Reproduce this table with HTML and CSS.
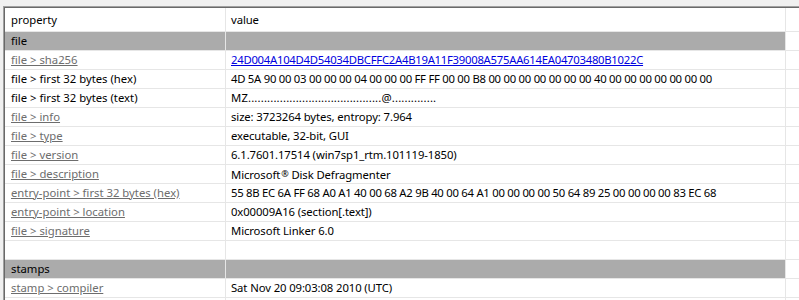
FILE: index.html
```html
<!DOCTYPE html>
<html lang="en">
<head>
    <meta charset="UTF-8">
    <title>file properties</title>
    <link rel="stylesheet" href="styles.css">
</head>
<body>
    <div class="frame">
        <div class="grid">
            <div class="row head">
                <div class="cell key">property</div>
                <div class="cell val">value</div>
                <div class="cell fill"></div>
            </div>

            <div class="row section">
                <div class="cell key">file</div>
                <div class="cell val"></div>
                <div class="cell fill"></div>
            </div>
            <div class="row">
                <div class="cell key"><a class="prop" href="#">file &gt; sha256</a></div>
                <div class="cell val num"><a class="hash" href="#">24D004A104D4D54034DBCFFC2A4B19A11F39008A575AA614EA04703480B1022C</a></div>
                <div class="cell fill"></div>
            </div>
            <div class="row">
                <div class="cell key">file &gt; first 32 bytes (hex)</div>
                <div class="cell val num">4D 5A 90 00 03 00 00 00 04 00 00 00 FF FF 00 00 B8 00 00 00 00 00 00 00 40 00 00 00 00 00 00 00</div>
                <div class="cell fill"></div>
            </div>
            <div class="row">
                <div class="cell key">file &gt; first 32 bytes (text)</div>
                <div class="cell val dots">MZ..........................................@..............</div>
                <div class="cell fill"></div>
            </div>
            <div class="row">
                <div class="cell key"><a class="prop" href="#">file &gt; info</a></div>
                <div class="cell val">size: 3723264 bytes, entropy: 7.964</div>
                <div class="cell fill"></div>
            </div>
            <div class="row">
                <div class="cell key"><a class="prop" href="#">file &gt; type</a></div>
                <div class="cell val">executable, 32-bit, GUI</div>
                <div class="cell fill"></div>
            </div>
            <div class="row">
                <div class="cell key"><a class="prop" href="#">file &gt; version</a></div>
                <div class="cell val">6.1.7601.17514 (win7sp1_rtm.101119-1850)</div>
                <div class="cell fill"></div>
            </div>
            <div class="row">
                <div class="cell key"><a class="prop" href="#">file &gt; description</a></div>
                <div class="cell val">Microsoft<span class="reg">&reg;</span> Disk Defragmenter</div>
                <div class="cell fill"></div>
            </div>
            <div class="row">
                <div class="cell key"><a class="prop" href="#">entry-point &gt; first 32 bytes (hex)</a></div>
                <div class="cell val num">55 8B EC 6A FF 68 A0 A1 40 00 68 A2 9B 40 00 64 A1 00 00 00 00 50 64 89 25 00 00 00 00 83 EC 68</div>
                <div class="cell fill"></div>
            </div>
            <div class="row">
                <div class="cell key"><a class="prop" href="#">entry-point &gt; location</a></div>
                <div class="cell val">0x00009A16 (section[.text])</div>
                <div class="cell fill"></div>
            </div>
            <div class="row">
                <div class="cell key"><a class="prop" href="#">file &gt; signature</a></div>
                <div class="cell val">Microsoft Linker 6.0</div>
                <div class="cell fill"></div>
            </div>
            <div class="row">
                <div class="cell key"></div>
                <div class="cell val"></div>
                <div class="cell fill"></div>
            </div>

            <div class="row section">
                <div class="cell key">stamps</div>
                <div class="cell val"></div>
                <div class="cell fill"></div>
            </div>
            <div class="row">
                <div class="cell key"><a class="prop" href="#">stamp &gt; compiler</a></div>
                <div class="cell val">Sat Nov 20 09:03:08 2010 (UTC)</div>
                <div class="cell fill"></div>
            </div>
            <div class="row">
                <div class="cell key"></div>
                <div class="cell val"></div>
                <div class="cell fill"></div>
            </div>
        </div>
    </div>
</body>
</html>
```

FILE: styles.css
```css
* {
    margin: 0;
    padding: 0;
    box-sizing: border-box;
}

html {
    overflow: hidden;
}

body {
    font-family: 'Noto Sans', 'Open Sans', sans-serif;
    font-size: 11.3px;
    color: #000;
    background: #f0f0f0;
    padding: 6px 0 0 3px;
    height: 300px;
    overflow: hidden;
}

/* sunken frame */
.frame {
    border-top: 1px solid #a0a0a0;
    border-left: 1px solid #a0a0a0;
    height: 100%;
}

.grid {
    border-top: 1px solid #696969;
    border-left: 1px solid #696969;
    background: #fff;
    height: 100%;
    overflow: hidden;
}

.row {
    display: flex;
    height: 19px;
}

.row.head {
    height: 24px;
}

.cell {
    border-right: 1px solid #e6e6e6;
    border-bottom: 1px solid #e6e6e6;
    line-height: 18px;
    white-space: nowrap;
    overflow: hidden;
}

.head .cell {
    line-height: 23px;
}

.key {
    width: 221px;
    padding-left: 6px;
}

.val {
    width: 560px;
    padding-left: 5px;
    letter-spacing: -0.1px;
}

.val.num {
    letter-spacing: -0.26px;
}

.val.dots {
    letter-spacing: 0.15px;
}

.reg {
    font-size: 9px;
    vertical-align: 2px;
    padding-left: 1px;
}

.fill {
    flex: 1;
    border-right: none;
}

.section .key,
.section .val {
    background: #ababab;
    border-right-color: #e6e6e6;
}

.prop {
    color: #6d6d6d;
}

.hash {
    color: #0000e0;
}
```
